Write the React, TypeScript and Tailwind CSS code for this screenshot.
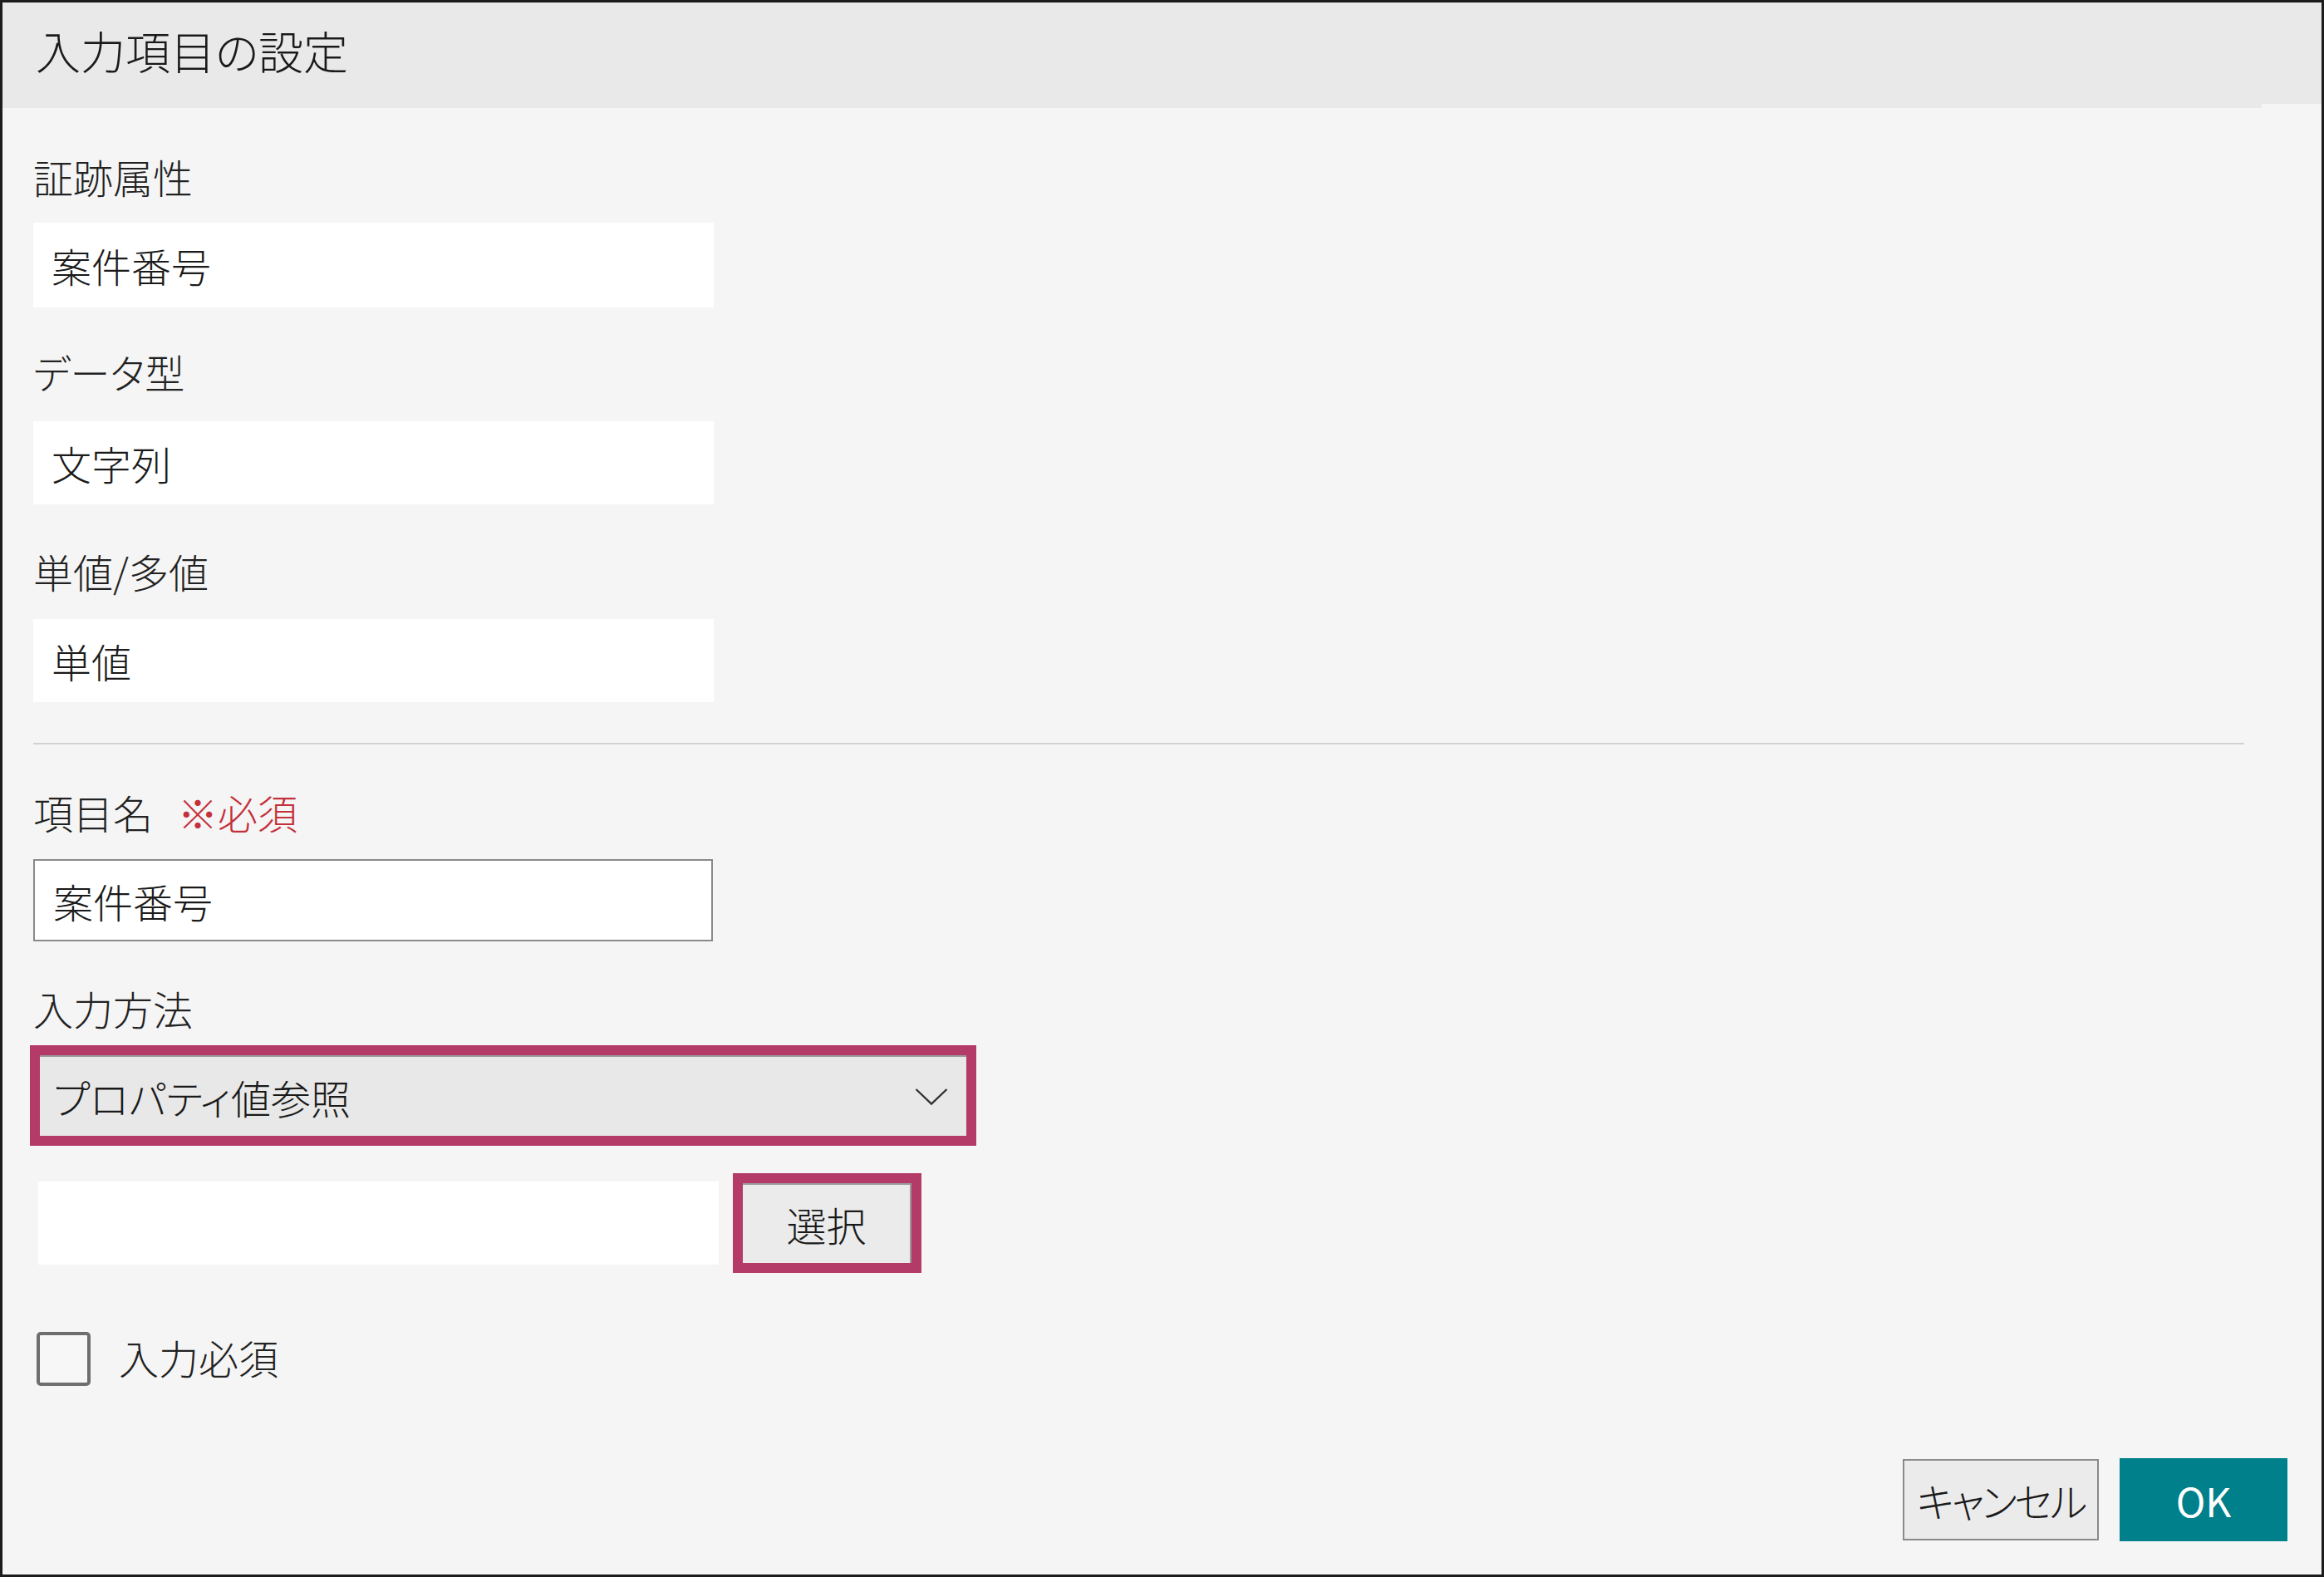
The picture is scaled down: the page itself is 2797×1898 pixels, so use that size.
const labelCls = "h-[60px] pb-[10px] flex items-center text-[48px] leading-none text-[#222]";
const readonlyCls = "w-[819px] bg-white flex items-center pl-[22px] text-[48px] leading-none text-[#1a1a1a]";

const App = () => {
  return (
    <div className="w-[2797px] h-[1898px] border-[3px] border-[#1c1c1c] bg-[#f5f5f5] flex flex-col font-light font-['Noto_Sans_CJK_JP',sans-serif] [font-feature-settings:'palt']">
      <div className="h-[122px] pb-[6px] bg-[#e9e9e9] flex items-center pl-[40px]">
        <h1 className="text-[54px] leading-none text-[#1a1a1a]">入力項目の設定</h1>
      </div>
      <div className="h-[5px] w-[2719px] bg-[#e9e9e9]" />

      <div className="flex-1 flex flex-col pl-[37px]">
        <div className={`${labelCls} mt-[57px]`}>証跡属性</div>
        <div className={`${readonlyCls} mt-[21px] h-[102px]`}>案件番号</div>

        <div className={`${labelCls} mt-[52px]`}>データ型</div>
        <div className={`${readonlyCls} mt-[25px] h-[100px]`}>文字列</div>

        <div className={`${labelCls} mt-[55px]`}>単値/多値</div>
        <div className={`${readonlyCls} mt-[23px] h-[100px]`}>単値</div>

        <div className="mt-[49px] h-[2px] w-[2661px] bg-[#d2d2d2]" />

        <div className={`${labelCls} mt-[56px] gap-[30px]`}>
          <span>項目名</span>
          <span className="text-[#c4303b]">※必須</span>
        </div>
        <div className="mt-[22px] h-[99px] w-[818px] bg-white border-2 border-[#8a8a8a] flex items-center pl-[22px] text-[48px] leading-none text-[#1a1a1a]">
          案件番号
        </div>

        <div className={`${labelCls} mt-[55px]`}>入力方法</div>
        <div className="mt-[10px] ml-[-4px] w-[1139px] h-[121px] border-[12px] border-[#b43a67]">
          <div className="h-full bg-[#e8e8e8] border-t-2 border-[#9a9a9a] flex items-center justify-between pl-[16px] pr-[22px]">
            <span className="text-[48px] leading-none text-[#1a1a1a]">プロパティ値参照</span>
            <svg width="40" height="22" viewBox="0 0 40 22" fill="none">
              <polyline points="1.5,2 20,19.5 38.5,2" stroke="#333" strokeWidth="2.4" />
            </svg>
          </div>
        </div>

        <div className="mt-[33px] flex items-center">
          <div className="ml-[6px] w-[819px] h-[100px] bg-white" />
          <div className="ml-[17px] w-[227px] h-[120px] border-[12px] border-[#b43a67]">
            <div className="h-full bg-[#ebebeb] border-t-2 border-r-2 border-[#9a9a9a] flex items-center justify-center text-[48px] leading-none text-[#1a1a1a]">
              選択
            </div>
          </div>
        </div>

        <div className="mt-[71px] flex items-center">
          <div className="ml-[4px] w-[65px] h-[65px] border-[4px] border-[#6e6e6e] rounded-[5px] bg-[#f7f7f7]" />
          <span className="ml-[34px] mb-[6px] text-[48px] leading-none text-[#222]">入力必須</span>
        </div>

        <div className="mt-auto mb-[40px] mr-[41px] flex justify-end items-center gap-[25px]">
          <button className="w-[236px] h-[98px] bg-[#ebebeb] border-2 border-[#8a8a8a] text-[48px] leading-none tracking-[-3px] text-[#1a1a1a]">
            キャンセル
          </button>
          <button className="w-[202px] h-[100px] bg-[#00808a] text-[48px] font-normal leading-none text-white">
            OK
          </button>
        </div>
      </div>
    </div>
  );
};

export default App;
